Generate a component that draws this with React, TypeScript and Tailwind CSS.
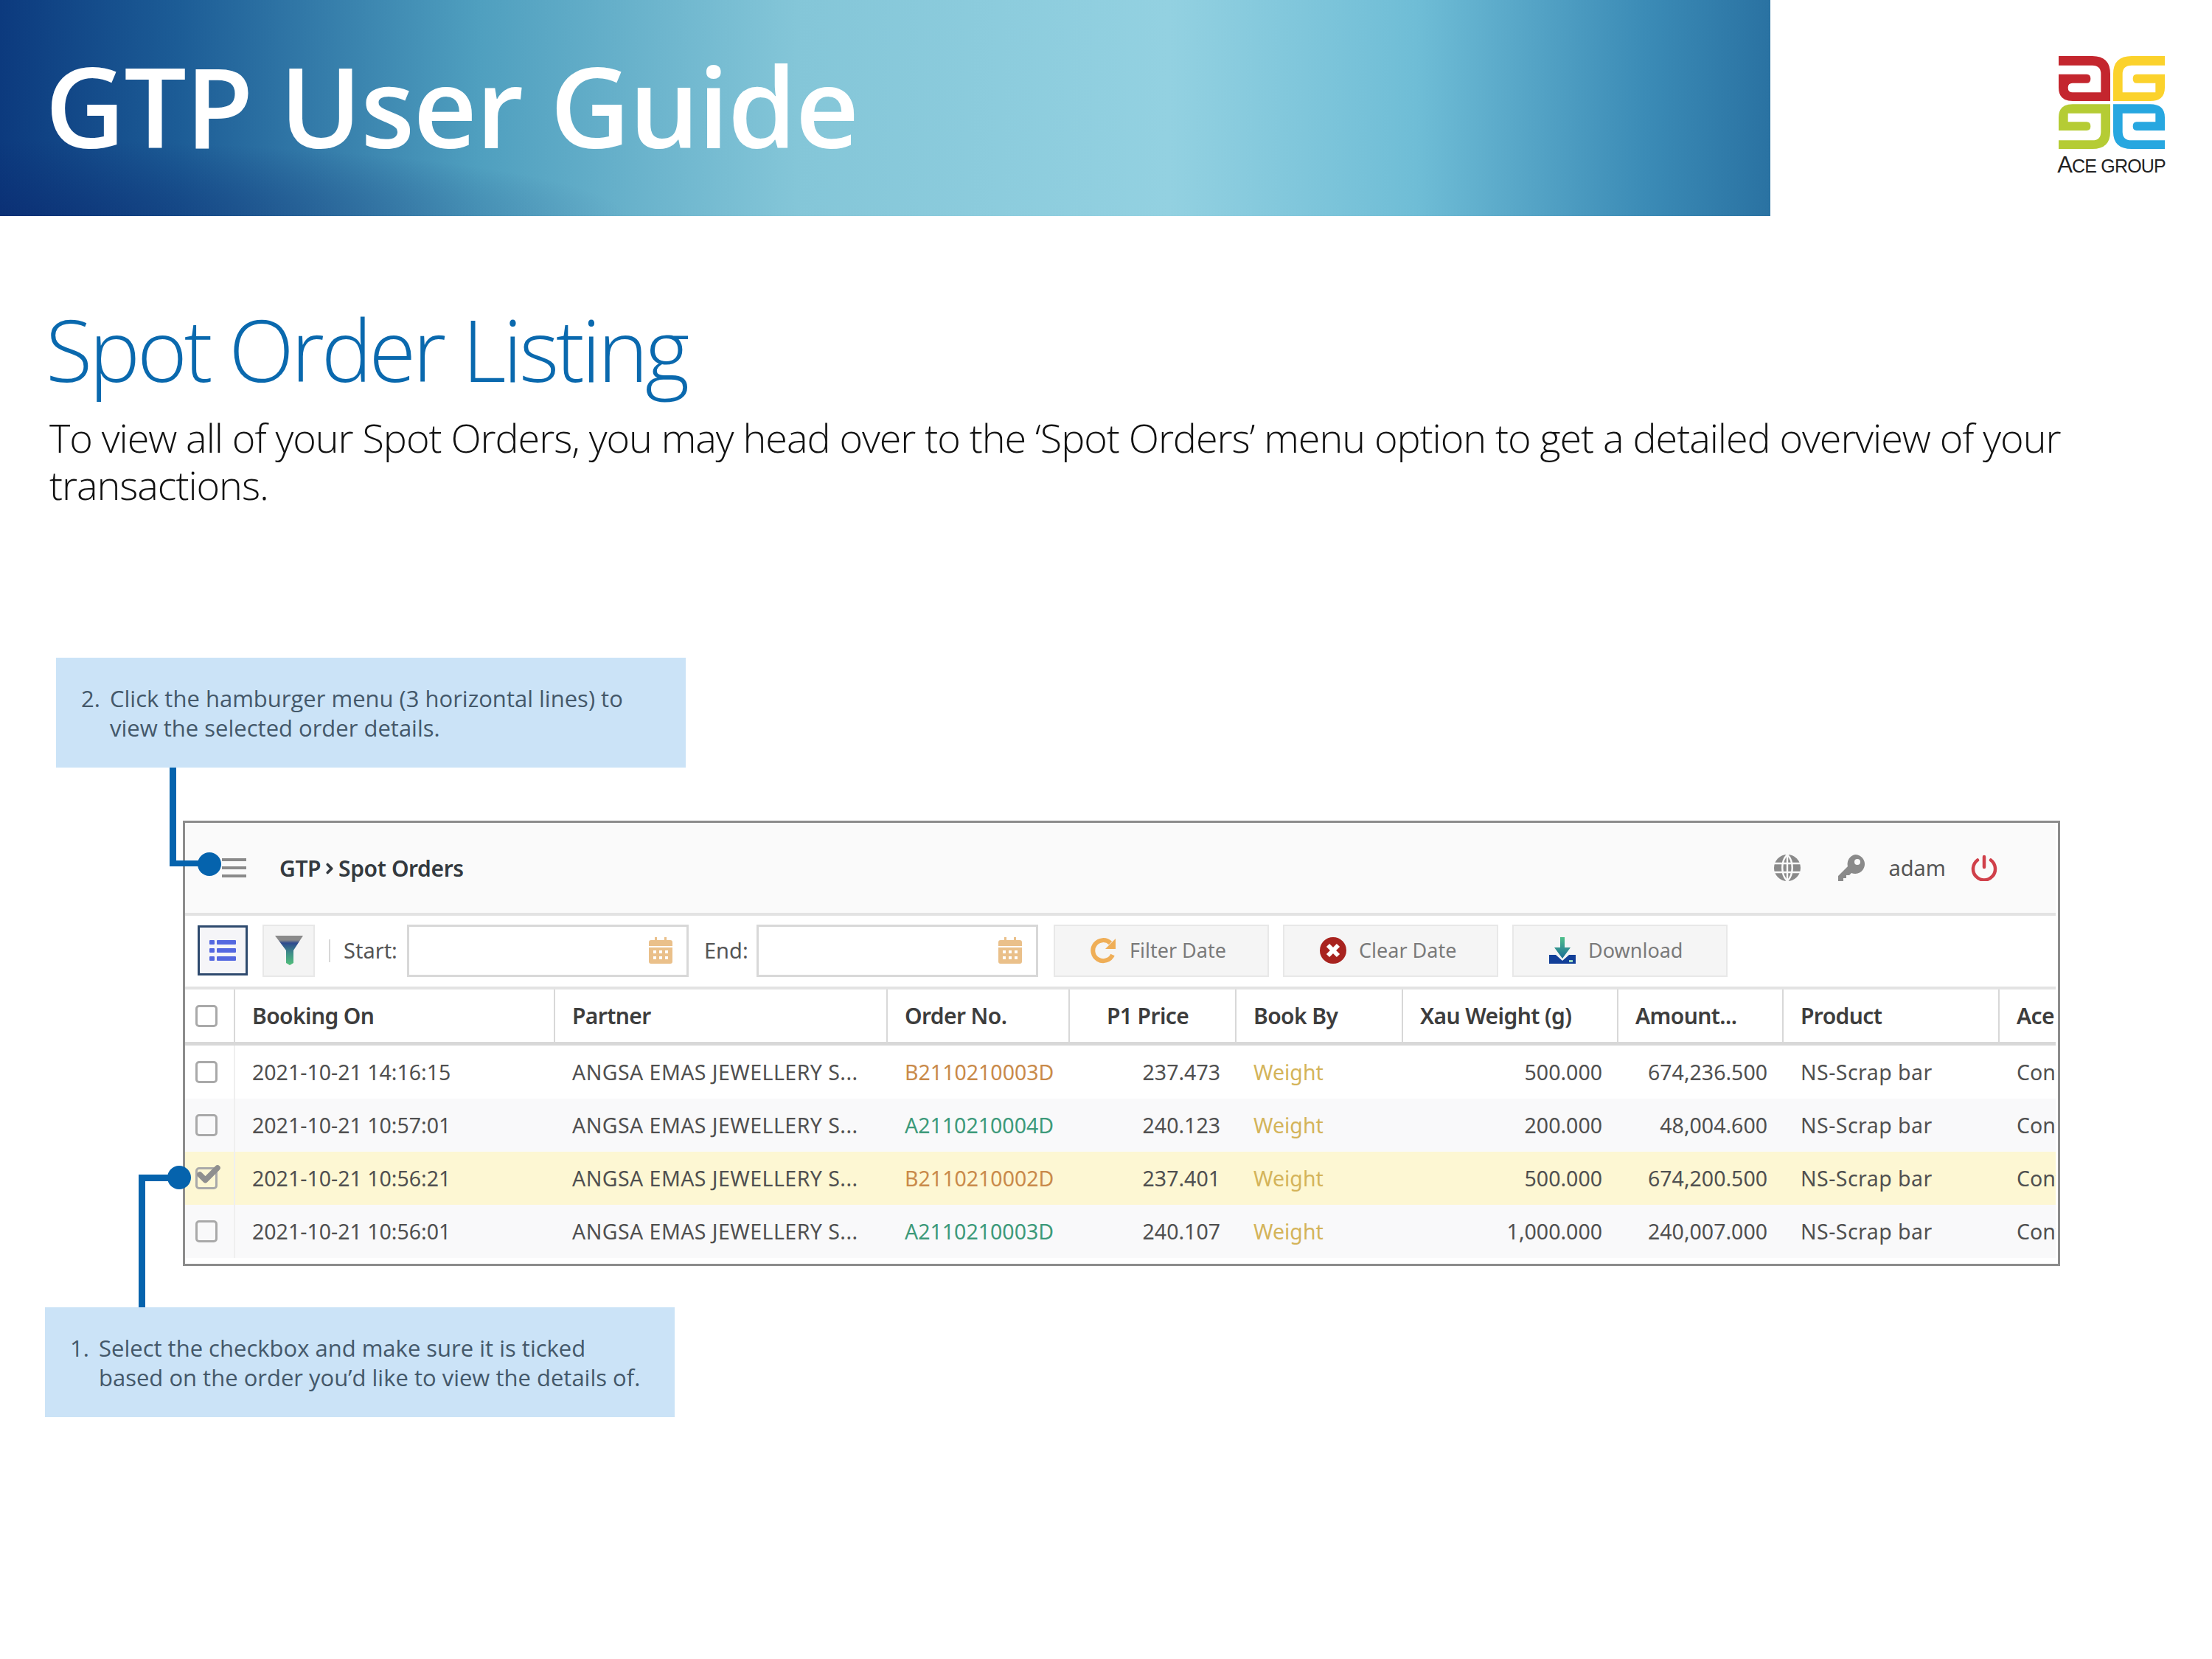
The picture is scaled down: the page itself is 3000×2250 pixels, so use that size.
import { Check, ChevronRight } from 'lucide-react'

const rows = [
  { on: '2021-10-21 14:16:15', no: 'B2110210003D', price: '237.473', xau: '500.000', amount: '674,236.500', bg: 'bg-white' },
  { on: '2021-10-21 10:57:01', no: 'A2110210004D', price: '240.123', xau: '200.000', amount: '48,004.600', bg: 'bg-[#f9f9fa]' },
  { on: '2021-10-21 10:56:21', no: 'B2110210002D', price: '237.401', xau: '500.000', amount: '674,200.500', bg: 'bg-[#fdf7d3]', checked: true },
  { on: '2021-10-21 10:56:01', no: 'A2110210003D', price: '240.107', xau: '1,000.000', amount: '240,007.000', bg: 'bg-[#f9f9fa]' },
]

function Logo() {
  return (
    <svg viewBox="278 112 432 378" className="w-[144px] h-[126px]">
      <path fill="#c4262e" d="M278 112H415Q488 112 488 185V295H335Q278 295 278 240V186H392Q408 186 408 204Q408 222 392 222H335Q316 222 316 241Q316 260 335 260H450V185Q450 150 415 150H278Z" />
      <path fill="#fbd22c" d="M710 112H575Q500 112 500 185V295H650Q710 295 710 240V186H595Q580 186 580 204Q580 222 595 222H672V260H538V185Q538 150 575 150H710Z" />
      <path fill="#b5cc34" d="M488 308H335Q278 308 278 362V415H392Q408 415 408 398Q408 380 392 380H316V345H450V420Q450 455 415 455H278V490H415Q488 490 488 420Z" />
      <path fill="#27a7e0" d="M500 308H650Q710 308 710 362V415H595Q580 415 580 398Q580 380 595 380H672V345H538V420Q538 455 575 455H710V490H575Q500 490 500 420Z" />
    </svg>
  )
}

function CalendarIcon() {
  return (
    <svg viewBox="0 0 32 36" className="w-[32px] h-[36px]">
      <path fill="#eac08a" d="M8 0h3v4h10V0h3v4h5q3 0 3 3v5H0V7q0-3 3-3h5zM0 14h32v19q0 3-3 3H3q-3 0-3-3z" />
      <g fill="#fff">
        <rect x="6" y="18" width="4" height="4" /><rect x="14" y="18" width="4" height="4" /><rect x="22" y="18" width="4" height="4" />
        <rect x="6" y="26" width="4" height="4" /><rect x="14" y="26" width="4" height="4" /><rect x="22" y="26" width="4" height="4" />
      </g>
    </svg>
  )
}

function Box({ checked }: { checked?: boolean }) {
  return (
    <div className="relative w-[30px] h-[30px] rounded-[5px] border-[3px] border-[#a9a9a9] bg-transparent">
      {checked && <Check size={36} strokeWidth={5} className="absolute left-[-3px] top-[-11px] text-[#8f8f8f]" />}
    </div>
  )
}

function ToolButton({ icon, label }: { icon: React.ReactNode; label: string }) {
  return (
    <div className="flex items-center w-[292px] h-[71px] pl-[48px] gap-[17px] bg-[#f5f5f5] border-2 border-[#e8e8e8] text-[27px] text-[#7a7a7a]">
      <span className="w-[36px] flex justify-center">{icon}</span>
      {label}
    </div>
  )
}

function HeadCell({ w, pl = 'pl-[23px]', children, last }: { w: string; pl?: string; children: React.ReactNode; last?: boolean }) {
  return (
    <div className={`${w} ${pl} shrink-0 h-full flex items-center whitespace-nowrap ${last ? '' : 'border-r-2 border-[#d8d8d8]'}`}>
      {children}
    </div>
  )
}

export default function App() {
  return (
    <div className="relative w-[3000px] h-[2250px] bg-white overflow-hidden font-['Open_Sans',sans-serif]">
      {/* Banner */}
      <div className="flex h-[293px]">
        <div className="relative w-[2402px] h-full flex items-center pl-[61px] pb-[8px] bg-[linear-gradient(90deg,#0c3a7e_0%,#1c5c96_10%,#4f9fbf_27%,#84c6d8_45%,#93d1e1_66%,#6fbdd6_80%,#3b8bb6_93%,#2a72a2_100%)]">
          <div className="absolute inset-0 bg-[radial-gradient(ellipse_at_0%_100%,rgba(10,40,110,0.55),transparent_25%)]" />
          <h1 className="relative text-[150px] leading-none font-semibold text-white tracking-[-1.6px]">GTP User Guide</h1>
        </div>
        <div className="flex-1 flex flex-col items-center pt-[76px] pl-[389px] pr-[63px]">
          <Logo />
          <div className="mt-[7px] font-['Liberation_Sans',sans-serif] text-[25px] leading-[30px] text-[#222] tracking-[-0.8px] whitespace-nowrap">
            <span className="text-[31px]">A</span>CE GROUP
          </div>
        </div>
      </div>

      {/* Intro */}
      <h2 className="mt-[110px] ml-[62px] text-[116px] leading-[140px] font-light text-[#0a69ae] tracking-[-4.2px]">Spot Order Listing</h2>
      <p className="mt-[18px] ml-[67px] w-[2850px] text-[54px] leading-[64px] font-light text-[#111] tracking-[-1.08px]">
        To view all of your Spot Orders, you may head over to the ‘Spot Orders’ menu option to get a detailed overview of your transactions.
      </p>

      {/* Callout 2 */}
      <div className="mt-[203px] ml-[76px] w-[854px] h-[149px] bg-[#cbe3f7] flex items-center pl-[34px] text-[31px] leading-[40px] text-[#44586a]">
        <span className="w-[39px] self-start mt-[35px]">2.</span>
        <span>Click the hamburger menu (3 horizontal lines) to<br />view the selected order details.</span>
      </div>

      {/* Screenshot panel */}
      <div className="mt-[72px] ml-[248px] w-[2546px] h-[604px] border-[3px] border-[#8c8c8c] bg-white font-['Noto_Sans',sans-serif]">
        <div className="w-[2537px] overflow-hidden">
          <div className="h-[126px] flex items-center justify-between bg-[#fafafa] border-b-4 border-[#e3e3e3]">
            <div className="flex items-center pl-[50px] gap-[45px]">
              <div className="flex flex-col gap-[7px]">
                <span className="block w-[33px] h-[4px] bg-[#8a8a8a]" />
                <span className="block w-[33px] h-[4px] bg-[#8a8a8a]" />
                <span className="block w-[33px] h-[4px] bg-[#8a8a8a]" />
              </div>
              <span className="flex items-center text-[30px] font-semibold text-[#343a40] tracking-[-0.4px]">
                GTP<ChevronRight size={22} strokeWidth={4} className="mx-[1px] mt-[1px]" />Spot Orders
              </span>
            </div>
            <div className="flex items-center pr-[79px] text-[#8a8a8a]">
              <svg viewBox="0 0 24 24" className="w-[36px] h-[36px]">
                <circle cx="12" cy="12" r="12" fill="#8a8a8a" />
                <path stroke="#fafafa" strokeWidth="1.6" fill="none" d="M0 8h24M0 16h24M12 0v24M12 0C6 6 6 18 12 24M12 0c6 6 6 18 0 24" />
              </svg>
              <svg viewBox="0 0 36 36" className="ml-[50px] w-[38px] h-[36px]">
                <path fill="#8a8a8a" fillRule="evenodd" d="M23 0a13 13 0 1 1-5 25l-3 3h-4v4H7v4H0v-7l13-13A13 13 0 0 1 23 0zm3 6a4 4 0 1 0 0 8 4 4 0 0 0 0-8z" />
              </svg>
              <span className="ml-[32px] text-[29px] text-[#555]">adam</span>
              <svg viewBox="0 0 36 36" className="ml-[34px] w-[36px] h-[36px]" fill="none" stroke="#d0404a" strokeWidth="4.5" strokeLinecap="round">
                <path d="M18 3v14M9 7.5a15 15 0 1 0 18 0" />
              </svg>
            </div>
          </div>

          <div className="h-[100px] flex items-center pl-[17px] pb-[2px] border-b-4 border-[#e3e3e3]">
            <div className="w-[68px] h-[68px] flex items-center justify-center bg-[#f5f5f8] border-[3px] border-[#2e4a6e]">
              <svg viewBox="0 0 36 30" className="w-[36px] h-[30px]" fill="#5468e0">
                <rect x="0" y="1" width="7" height="6" rx="1" /><rect x="10" y="1" width="26" height="6" rx="1" />
                <rect x="0" y="12" width="7" height="6" rx="1" /><rect x="10" y="12" width="26" height="6" rx="1" />
                <rect x="0" y="23" width="7" height="6" rx="1" /><rect x="10" y="23" width="26" height="6" rx="1" />
              </svg>
            </div>
            <div className="ml-[20px] w-[71px] h-[71px] flex items-center justify-center bg-[#f4f4f4] border-2 border-[#e8e8e8]">
              <svg viewBox="0 0 38 40" className="w-[38px] h-[40px]">
                <defs>
                  <linearGradient id="fun" x1="0" x2="0" y1="0" y2="1">
                    <stop offset="0" stopColor="#8a8a8a" /><stop offset="0.15" stopColor="#8a8a8a" /><stop offset="0.25" stopColor="#2e4a8e" /><stop offset="0.6" stopColor="#3f8f88" /><stop offset="1" stopColor="#52c07a" />
                  </linearGradient>
                </defs>
                <path fill="url(#fun)" d="M0 0h38L25 20v17l-5 3-5-3V20z" />
              </svg>
            </div>
            <span className="ml-[19px] w-[2px] h-[31px] bg-[#d8d8d8]" />
            <span className="ml-[18px] w-[86px] text-[29px] text-[#555]">Start:</span>
            <div className="w-[382px] h-[71px] flex items-center justify-end pr-[19px] border-[3px] border-[#d8d8d8] bg-white"><CalendarIcon /></div>
            <span className="ml-[21px] w-[71px] text-[29px] text-[#555]">End:</span>
            <div className="w-[382px] h-[71px] flex items-center justify-end pr-[19px] border-[3px] border-[#d8d8d8] bg-white"><CalendarIcon /></div>
            <div className="ml-[21px] flex gap-[19px]">
              <ToolButton label="Filter Date" icon={
                <svg viewBox="0 0 36 36" className="w-[36px] h-[36px]" fill="none">
                  <path stroke="#efae57" strokeWidth="6" d="M30 24A14 14 0 1 1 27 8" />
                  <path fill="#efae57" d="M34 2v14H20z" />
                </svg>
              } />
              <ToolButton label="Clear Date" icon={
                <svg viewBox="0 0 36 36" className="w-[36px] h-[36px]">
                  <circle cx="18" cy="18" r="18" fill="#a8231f" />
                  <path stroke="#fff" strokeWidth="6" d="M11 11l14 14M25 11L11 25" />
                </svg>
              } />
              <ToolButton label="Download" icon={
                <svg viewBox="0 0 36 36" className="w-[36px] h-[36px]">
                  <defs>
                    <linearGradient id="dl" x1="0" x2="0" y1="0" y2="1">
                      <stop offset="0" stopColor="#4fc08a" /><stop offset="1" stopColor="#1b6c96" />
                    </linearGradient>
                  </defs>
                  <path fill="url(#dl)" d="M15 0h6v14h8L18 29 7 14h8z" />
                  <path fill="#123f98" d="M0 24h9l9 8 9-8h9v12H0z" />
                  <rect x="27" y="31" width="5" height="3" fill="#9fd8c0" />
                </svg>
              } />
            </div>
          </div>

          <div className="h-[76px] flex items-center border-b-[5px] border-[#d8d8d8] text-[30px] font-semibold text-[#3d3d3d] tracking-[-0.6px]">
            <div className="w-[68px] shrink-0 h-full flex items-center pl-[14px] border-r-2 border-[#d8d8d8]"><Box /></div>
            <HeadCell w="w-[434px]">Booking On</HeadCell>
            <HeadCell w="w-[451px]">Partner</HeadCell>
            <HeadCell w="w-[247px]">Order No.</HeadCell>
            <HeadCell w="w-[226px]" pl="pl-[50px]">P1 Price</HeadCell>
            <HeadCell w="w-[226px]">Book By</HeadCell>
            <HeadCell w="w-[292px]">Xau Weight (g)</HeadCell>
            <HeadCell w="w-[224px]">Amount...</HeadCell>
            <HeadCell w="w-[293px]">Product</HeadCell>
            <HeadCell w="w-[80px]" last>Ace</HeadCell>
          </div>

          {rows.map((r) => (
            <div key={r.on} className={`${r.bg} h-[72px] flex items-center text-[28.5px] text-[#505050] whitespace-nowrap`}>
              <div className="w-[68px] shrink-0 h-full flex items-center pl-[14px] border-r-2 border-[#efefef]"><Box checked={r.checked} /></div>
              <div className="w-[434px] shrink-0 pl-[23px]">{r.on}</div>
              <div className="w-[451px] shrink-0 pl-[23px] tracking-[0.45px]">ANGSA EMAS JEWELLERY S...</div>
              <div className={`w-[247px] shrink-0 pl-[23px] ${r.no.startsWith('B') ? 'text-[#c98a4a]' : 'text-[#3d9a7a]'}`}>{r.no}</div>
              <div className="w-[226px] shrink-0 pr-[22px] text-right">{r.price}</div>
              <div className="w-[226px] shrink-0 pl-[23px] text-[#d4b45a]">Weight</div>
              <div className="w-[292px] shrink-0 pr-[22px] text-right">{r.xau}</div>
              <div className="w-[224px] shrink-0 pr-[22px] text-right">{r.amount}</div>
              <div className="w-[293px] shrink-0 pl-[23px] tracking-[0.45px]">NS-Scrap bar</div>
              <div className="w-[180px] shrink-0 pl-[23px]">Confirmed</div>
            </div>
          ))}
        </div>
      </div>

      {/* Callout 1 */}
      <div className="mt-[56px] ml-[61px] w-[854px] h-[149px] bg-[#cbe3f7] flex items-center pl-[34px] text-[31px] leading-[40px] text-[#44586a]">
        <span className="w-[39px] self-start mt-[35px]">1.</span>
        <span>Select the checkbox and make sure it is ticked<br />based on the order you’d like to view the details of.</span>
      </div>

      {/* Connector lines */}
      <div className="absolute left-[230px] top-[1041px] w-[9px] h-[134px] bg-[#0563ad]" />
      <div className="absolute left-[230px] top-[1167px] w-[50px] h-[8px] bg-[#0563ad]" />
      <div className="absolute left-[268px] top-[1156px] w-[32px] h-[32px] rounded-full bg-[#0563ad]" />
      <div className="absolute left-[188px] top-[1593px] w-[9px] h-[180px] bg-[#0563ad]" />
      <div className="absolute left-[188px] top-[1593px] w-[50px] h-[9px] bg-[#0563ad]" />
      <div className="absolute left-[227px] top-[1581px] w-[32px] h-[32px] rounded-full bg-[#0563ad]" />
    </div>
  )
}
